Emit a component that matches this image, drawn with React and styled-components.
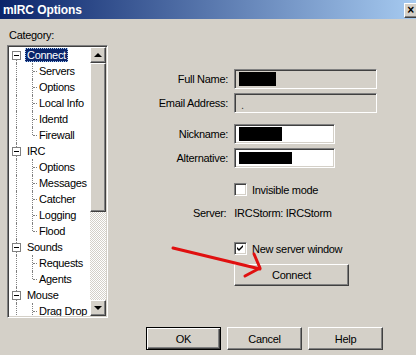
import React from "react";
import styled, { createGlobalStyle } from "styled-components";

const Global = createGlobalStyle`
  html, body {
    margin: 0;
    padding: 0;
    background: #d4d0c8;
  }
`;

const face = "#d4d0c8";

const raised = `
  border: 1px solid;
  border-color: #fff #404040 #404040 #fff;
  box-shadow: inset -1px -1px 0 #808080;
`;

const sunken = `
  border: 1px solid;
  border-color: #808080 #fff #fff #808080;
  box-shadow: inset 1px 1px 0 #404040, inset -1px -1px 0 ${face};
`;

const Window = styled.div`
  position: relative;
  width: 416px;
  height: 355px;
  background: ${face};
  overflow: hidden;
  font-family: "Liberation Sans", Arial, sans-serif;
  font-size: 11px;
  letter-spacing: -0.3px;
  color: #000;
`;

const TitleBar = styled.div`
  height: 19px;
  display: flex;
  align-items: center;
  justify-content: space-between;
  padding-left: 3px;
  background: linear-gradient(to right, #0a246a, #a6caf0);
  overflow: hidden;
`;

const Title = styled.span`
  color: #fff;
  font-weight: bold;
  font-size: 12px;
  letter-spacing: -0.1px;
`;

const CloseButton = styled.div`
  box-sizing: border-box;
  width: 16px;
  height: 15px;
  margin-right: -4px;
  margin-top: 1px;
  background: ${face};
  ${raised}
  display: flex;
  align-items: center;
  justify-content: center;
  padding-right: 3px;
  font-weight: bold;
  font-size: 12px;
  line-height: 12px;
`;

const Content = styled.div`
  display: flex;
  padding-left: 7px;
`;

const LeftCol = styled.div`
  width: 101px;
  padding-top: 10px;
`;

const CategoryLabel = styled.div`
  line-height: 13px;
  padding-left: 2px;
  margin-bottom: 3px;
`;

const TreeBox = styled.div`
  box-sizing: border-box;
  height: 273px;
  display: flex;
  background: #fff;
  border: 1px solid;
  border-color: #808080 #fff #fff #808080;
  box-shadow: inset 1px 1px 0 #404040, inset -1px -1px 0 ${face};
  padding: 1px;
`;

const TreeList = styled.div`
  flex: 1;
  overflow: hidden;
`;

const Row = styled.div`
  position: relative;
  height: 16px;
  display: flex;
  align-items: center;
  padding-left: ${p => (p.$child ? 28 : 16)}px;
  white-space: nowrap;
`;

const Trunk = styled.span`
  position: absolute;
  left: 7px;
  top: ${p => (p.$first ? 8 : 0)}px;
  bottom: 0;
  border-left: 1px dotted #808080;
`;

const BranchV = styled.span`
  position: absolute;
  left: 23px;
  top: 0;
  height: ${p => (p.$last ? 8 : 16)}px;
  border-left: 1px dotted #808080;
`;

const BranchH = styled.span`
  position: absolute;
  left: 24px;
  top: 8px;
  width: 4px;
  border-top: 1px dotted #808080;
`;

const Expander = styled.span`
  position: absolute;
  left: 3px;
  top: 4px;
  box-sizing: border-box;
  width: 9px;
  height: 9px;
  border: 1px solid #808080;
  background: #fff;

  &::after {
    content: "";
    position: absolute;
    left: 1px;
    top: 3px;
    width: 5px;
    height: 1px;
    background: #000;
  }
`;

const Label = styled.span`
  height: 14px;
  line-height: 14px;
  padding: 0 2px;
  box-sizing: border-box;
  background: ${p => (p.$selected ? "#0a246a" : "transparent")};
  color: ${p => (p.$selected ? "#fff" : "#000")};
  outline: ${p => (p.$selected ? "1px dotted #a6caf0" : "none")};
  outline-offset: -1px;
`;

const ScrollBar = styled.div`
  width: 16px;
  display: flex;
  flex-direction: column;
`;

const ScrollButton = styled.div`
  box-sizing: border-box;
  height: 16px;
  background: ${face};
  ${raised}
  display: flex;
  align-items: center;
  justify-content: center;

  &::after {
    content: "";
    border-left: 4px solid transparent;
    border-right: 4px solid transparent;
    ${p => (p.$down ? "border-top: 4px solid #000;" : "border-bottom: 4px solid #000;")}
  }
`;

const Thumb = styled.div`
  box-sizing: border-box;
  height: 149px;
  background: ${face};
  ${raised}
`;

const Track = styled.div`
  flex: 1;
  background: repeating-conic-gradient(#fff 0 25%, ${face} 0 50%) 0 0 / 2px 2px;
`;

const RightCol = styled.div`
  flex: 1;
  padding-top: 50px;
`;

const Form = styled.div`
  display: grid;
  grid-template-columns: 120px auto;
  column-gap: 6px;
  align-items: center;
`;

const FieldLabel = styled.div`
  text-align: right;
  margin-top: ${p => p.$mt || 0}px;
`;

const Input = styled.div`
  box-sizing: border-box;
  width: ${p => p.$w}px;
  height: 20px;
  margin-top: ${p => p.$mt || 0}px;
  background: ${p => (p.$disabled ? face : "#fff")};
  ${sunken}
  display: flex;
  align-items: center;
  padding-left: 4px;
`;

const Redacted = styled.span`
  display: block;
  width: ${p => p.$w}px;
  height: ${p => p.$h}px;
  background: #000;
`;

const Dot = styled.span`
  padding-left: 2px;
  padding-top: 4px;
  color: #404040;
`;

const CheckRow = styled.div`
  display: flex;
  align-items: center;
  gap: 5px;
  margin-left: 126px;
  margin-top: ${p => p.$mt}px;
  height: 13px;
`;

const CheckBox = styled.span`
  box-sizing: border-box;
  width: 13px;
  height: 13px;
  background: #fff;
  ${sunken}
  display: flex;
  align-items: center;
  justify-content: center;
`;

const ServerLine = styled.div`
  margin-left: 85px;
  margin-top: 11px;
  line-height: 13px;
  display: flex;
  gap: 8px;
`;

const Button = styled.div`
  box-sizing: border-box;
  width: ${p => p.$w}px;
  height: ${p => p.$h}px;
  background: ${face};
  display: flex;
  align-items: center;
  justify-content: center;
  border: 1px solid;
  border-color: ${p => (p.$default ? "#000" : "#fff #404040 #404040 #fff")};
  box-shadow: ${p =>
    p.$default
      ? "inset 1px 1px 0 #fff, inset -1px -1px 0 #404040, inset -2px -2px 0 #808080"
      : "inset -1px -1px 0 #808080"};
`;

const ConnectButton = styled(Button)`
  margin-left: 126px;
  margin-top: 9px;
`;

const ButtonRow = styled.div`
  display: flex;
  gap: 6px;
  margin-left: 38px;
  margin-top: 41px;
`;

const Arrow = styled.svg`
  position: absolute;
  left: 165px;
  top: 240px;
`;

// the last group goes on below the visible part of the list
const tree = [
  { label: "Connect", children: ["Servers", "Options", "Local Info", "Identd", "Firewall"] },
  { label: "IRC", children: ["Options", "Messages", "Catcher", "Logging", "Flood"] },
  { label: "Sounds", children: ["Requests", "Agents"] },
  { label: "Mouse", children: ["Drag Drop"], more: true },
];

const Tree = () => (
  <TreeList>
    {tree.map((group, gi) => (
      <React.Fragment key={group.label}>
        <Row>
          <Trunk $first={gi === 0} />
          <Expander />
          <Label $selected={gi === 0}>{group.label}</Label>
        </Row>
        {group.children.map((child, ci) => (
          <Row $child key={child + ci}>
            <Trunk />
            <BranchV $last={!group.more && ci === group.children.length - 1} />
            <BranchH />
            <Label>{child}</Label>
          </Row>
        ))}
      </React.Fragment>
    ))}
  </TreeList>
);

const Check = () => (
  <svg width="7" height="7" viewBox="0 0 7 7">
    <path d="M0 2 L2 4 L6 0 L6 2 L2 6 L0 4 Z" fill="#000" />
  </svg>
);

const App = () => (
  <Window>
    <Global />
    <TitleBar>
      <Title>mIRC Options</Title>
      <CloseButton>×</CloseButton>
    </TitleBar>
    <Content>
      <LeftCol>
        <CategoryLabel>Category:</CategoryLabel>
        <TreeBox>
          <Tree />
          <ScrollBar>
            <ScrollButton />
            <Thumb />
            <Track />
            <ScrollButton $down />
          </ScrollBar>
        </TreeBox>
      </LeftCol>
      <RightCol>
        <Form>
          <FieldLabel>Full Name:</FieldLabel>
          <Input $w={143} $disabled>
            <Redacted $w={37} $h={14} />
          </Input>
          <FieldLabel $mt={4}>Email Address:</FieldLabel>
          <Input $w={143} $mt={4} $disabled>
            <Dot>.</Dot>
          </Input>
          <FieldLabel $mt={11}>Nickname:</FieldLabel>
          <Input $w={101} $mt={11}>
            <Redacted $w={43} $h={14} />
          </Input>
          <FieldLabel $mt={4}>Alternative:</FieldLabel>
          <Input $w={101} $mt={4}>
            <Redacted $w={53} $h={12} />
          </Input>
        </Form>
        <CheckRow $mt={15}>
          <CheckBox />
          <span>Invisible mode</span>
        </CheckRow>
        <ServerLine>
          <span>Server:</span>
          <span>IRCStorm: IRCStorm</span>
        </ServerLine>
        <CheckRow $mt={22}>
          <CheckBox>
            <Check />
          </CheckBox>
          <span>New server window</span>
        </CheckRow>
        <ConnectButton $w={115} $h={22}>Connect</ConnectButton>
        <ButtonRow>
          <Button $w={75} $h={23} $default>OK</Button>
          <Button $w={75} $h={23}>Cancel</Button>
          <Button $w={75} $h={23}>Help</Button>
        </ButtonRow>
      </RightCol>
    </Content>
    <Arrow width="100" height="45" viewBox="0 0 100 45">
      <g stroke="#e01010" strokeWidth="3" fill="none" strokeLinecap="round" strokeLinejoin="round">
        <path d="M8 8 L95 29" />
        <path d="M89 14 L95 28 L80 36" />
      </g>
    </Arrow>
  </Window>
);

export default App;
